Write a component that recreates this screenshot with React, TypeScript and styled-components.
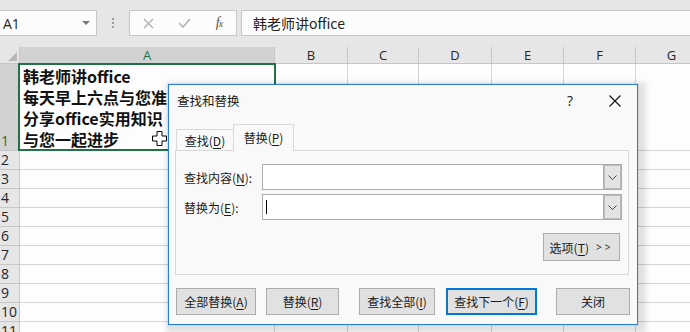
import React from "react";
import styled, { createGlobalStyle } from "styled-components";

const Global = createGlobalStyle`
  html, body { margin: 0; padding: 0; }
  body {
    width: 690px; height: 332px; overflow: hidden; background: #e6e6e6;
    font-family: "Noto Sans CJK SC", "Noto Sans", sans-serif;
  }
`;

const Page = styled.div`
  position: relative;
  width: 690px;
  height: 332px;
  overflow: hidden;
  background: #e6e6e6;
`;

/* ---------- formula bar ---------- */
const TopBar = styled.div`
  height: 47px;
  box-sizing: border-box;
  padding-top: 10px;
  display: flex;
  align-items: flex-start;
`;

const NameBox = styled.div`
  width: 97px;
  height: 26px;
  box-sizing: border-box;
  border: 1px solid #c6c6c6;
  border-left: none;
  background: #fcfcfc;
  display: flex;
  align-items: center;
  justify-content: space-between;
  padding: 0 6px 0 3px;
  font-family: "Open Sans", "Noto Sans", sans-serif;
  font-size: 14px;
  color: #262626;
`;

const Caret = styled.span`
  width: 0;
  height: 0;
  border-left: 4px solid transparent;
  border-right: 4px solid transparent;
  border-top: 4px solid #7a7a7a;
`;

const Dots = styled.div`
  width: 32px;
  height: 26px;
  display: flex;
  flex-direction: column;
  align-items: center;
  justify-content: center;
  gap: 2px;
  & > span {
    width: 2px;
    height: 2px;
    background: #9a9a9a;
  }
`;

const FxBox = styled.div`
  width: 108px;
  height: 26px;
  box-sizing: border-box;
  border: 1px solid #c6c6c6;
  background: #fcfcfc;
  display: grid;
  grid-template-columns: 36px 36px 34px;
  align-items: center;
  justify-items: center;
`;

const FxText = styled.span`
  font-family: "Liberation Serif", serif;
  font-style: italic;
  font-size: 14px;
  color: #555;
  letter-spacing: -1px;
  & > small {
    font-size: 10px;
  }
`;

const FormulaInput = styled.div`
  flex: 1;
  margin-left: 4px;
  height: 26px;
  box-sizing: border-box;
  border: 1px solid #c6c6c6;
  border-right: none;
  background: #fcfcfc;
  display: flex;
  align-items: center;
  padding-left: 11px;
  font-size: 14px;
  color: #222;
`;

/* ---------- sheet ---------- */
const Grid = styled.div`
  display: grid;
  grid-template-columns: 20px 255px 73px 71px 73px 72px 72px 72px;
  grid-template-rows: 17px 87px repeat(10, 19px);
  background: #ffffff;
`;

const Corner = styled.div`
  background: #e6e6e6;
  border-right: 1px solid #c6c6c6;
  border-bottom: 1px solid #c6c6c6;
  box-sizing: border-box;
  display: flex;
  align-items: flex-end;
  justify-content: flex-end;
  padding: 0 2px 2px 0;
`;

const CornerTri = styled.span`
  width: 0;
  height: 0;
  border-left: 9px solid transparent;
  border-bottom: 9px solid #b8b8b8;
`;

const ColHead = styled.div<{ $active?: boolean }>`
  box-sizing: border-box;
  background: ${(p) => (p.$active ? "#d2d2d2" : "#e6e6e6")};
  color: ${(p) => (p.$active ? "#217346" : "#262626")};
  border-right: 1px solid #c6c6c6;
  border-bottom: 1px solid ${(p) => (p.$active ? "#217346" : "#c6c6c6")};
  font-family: "Open Sans", "Noto Sans", sans-serif;
  font-size: 13px;
  line-height: 16px;
  text-align: center;
`;

const RowHead = styled.div<{ $active?: boolean }>`
  box-sizing: border-box;
  background: ${(p) => (p.$active ? "#d2d2d2" : "#e6e6e6")};
  color: ${(p) => (p.$active ? "#217346" : "#262626")};
  border-right: 1px solid ${(p) => (p.$active ? "#217346" : "#c6c6c6")};
  border-bottom: 1px solid #c6c6c6;
  font-family: "Open Sans", "Noto Sans", sans-serif;
  font-size: 14px;
  line-height: 18px;
  padding-left: 1px;
  display: flex;
  align-items: flex-end;
  overflow: hidden;
  white-space: nowrap;
`;

const Cell = styled.div`
  box-sizing: border-box;
  border-right: 1px solid #d4d4d4;
  border-bottom: 1px solid #d4d4d4;
  background: #fdfdfd;
`;

const SelectedCell = styled(Cell)`
  position: relative;
  display: flex;
  flex-direction: column;
  justify-content: flex-end;
  padding-left: 3px;
  font-weight: 700;
  font-size: 16px;
  line-height: 21px;
  color: #111;
  white-space: nowrap;
  &::after {
    content: "";
    position: absolute;
    left: -2px;
    top: -1px;
    right: -2px;
    bottom: -1px;
    border: 2px solid #217346;
    pointer-events: none;
  }
`;

const CellLine = styled.div`
  height: 21px;
  line-height: 21px;
`;

const CursorMark = styled.svg`
  position: absolute;
  left: 152px;
  top: 131px;
`;

/* ---------- dialog ---------- */
const Dialog = styled.div`
  position: absolute;
  left: 168px;
  top: 84px;
  width: 470px;
  height: 241px;
  box-sizing: border-box;
  border: 1px solid #2b7fd0;
  background: #f9f9f9;
  box-shadow: 0 0 0 1px rgba(0, 0, 0, 0.05), 3px 3px 5px 5px rgba(0, 0, 0, 0.11);
  display: flex;
  flex-direction: column;
  font-size: 12px;
  color: #1a1a1a;
`;

const TitleBar = styled.div`
  height: 31px;
  display: flex;
  align-items: center;
  padding: 0 12px 0 8px;
  font-size: 12.5px;
`;

const Title = styled.span`
  flex: 1;
`;

const TitleBtn = styled.span`
  width: 20px;
  display: flex;
  justify-content: center;
  align-items: center;
  font-family: "Open Sans", "Noto Sans", sans-serif;
  font-size: 14px;
  & + & {
    margin-left: 25px;
  }
`;

const Tabs = styled.div`
  margin: 8px 0 0 7px;
  height: 27px;
  display: flex;
  align-items: flex-end;
  position: relative;
  z-index: 1;
  margin-bottom: -1px;
`;

const Tab = styled.div<{ $active?: boolean }>`
  box-sizing: border-box;
  height: ${(p) => (p.$active ? "27px" : "22px")};
  width: ${(p) => (p.$active ? "61px" : "57px")};
  border: 1px solid #d9d9d9;
  border-bottom: ${(p) => (p.$active ? "none" : "1px solid #d9d9d9")};
  border-right: ${(p) => (p.$active ? "1px solid #d9d9d9" : "none")};
  background: #f9f9f9;
  display: flex;
  align-items: center;
  justify-content: center;
  padding-bottom: ${(p) => (p.$active ? "2px" : "0")};
`;

const Key = styled.span`
  text-decoration: underline;
  text-underline-offset: 2px;
`;

const Panel = styled.div`
  margin: 0 8px 0 6px;
  height: 125px;
  box-sizing: border-box;
  border: 1px solid #d9d9d9;
  padding: 13px 6px 0 8px;
  display: flex;
  flex-direction: column;
`;

const FieldRow = styled.div`
  display: grid;
  grid-template-columns: 78px 1fr;
  align-items: center;
  height: 26px;
  & + & {
    margin-top: 4px;
  }
`;

const Combo = styled.div`
  height: 26px;
  box-sizing: border-box;
  border: 1px solid #acacac;
  background: #ffffff;
  display: flex;
  align-items: stretch;
  justify-content: space-between;
`;

const TextCaret = styled.span`
  width: 1px;
  height: 14px;
  background: #000;
  align-self: center;
  margin-left: 3px;
`;

const DropBtn = styled.span`
  width: 17px;
  background: #e3e3e3;
  border-left: 1px solid #acacac;
  box-shadow: inset 0 0 0 1px #bdbdbd;
  display: flex;
  align-items: center;
  justify-content: center;
`;

const OptionsRow = styled.div`
  display: flex;
  justify-content: flex-end;
  margin-top: 13px;
  padding-right: 2px;
`;

const Button = styled.div<{ $w: number; $h?: number; $ml?: number; $primary?: boolean }>`
  width: ${(p) => p.$w}px;
  height: ${(p) => p.$h ?? 27}px;
  margin-left: ${(p) => p.$ml ?? 0}px;
  box-sizing: border-box;
  background: #e1e1e1;
  border: ${(p) => (p.$primary ? "2px solid #0078d7" : "1px solid #adadad")};
  display: flex;
  align-items: center;
  justify-content: center;
  font-size: 12px;
  white-space: nowrap;
`;

const Arrows = styled.span`
  font-family: "Open Sans", "Noto Sans", sans-serif;
  font-size: 10px;
  margin-left: 7px;
  letter-spacing: 3px;
`;

const ButtonRow = styled.div`
  display: flex;
  margin: 13px 0 0 7px;
`;

const Chevron = () => (
  <svg width="9" height="5" viewBox="0 0 9 5">
    <polyline points="0.5,0.5 4.5,4.5 8.5,0.5" fill="none" stroke="#444" strokeWidth="1" />
  </svg>
);

const cols = ["A", "B", "C", "D", "E", "F", "G"];

export default function App() {
  const rows = [2, 3, 4, 5, 6, 7, 8, 9, 10, 11];
  return (
    <Page>
      <Global />
      <TopBar>
        <NameBox>
          <span>A1</span>
          <Caret />
        </NameBox>
        <Dots>
          <span />
          <span />
          <span />
        </Dots>
        <FxBox>
          <svg width="11" height="11" viewBox="0 0 11 11">
            <path d="M1 1 L10 10 M10 1 L1 10" stroke="#b0b0b0" strokeWidth="1.3" />
          </svg>
          <svg width="13" height="10" viewBox="0 0 13 10">
            <path d="M1 5 L5 9 L12 1" fill="none" stroke="#b0b0b0" strokeWidth="1.5" />
          </svg>
          <FxText>
            f<small>x</small>
          </FxText>
        </FxBox>
        <FormulaInput>韩老师讲office</FormulaInput>
      </TopBar>

      <Grid>
        <Corner>
          <CornerTri />
        </Corner>
        {cols.map((c) => (
          <ColHead key={c} $active={c === "A"}>
            {c}
          </ColHead>
        ))}
        <RowHead $active>1</RowHead>
        <SelectedCell>
          <CellLine>韩老师讲office</CellLine>
          <CellLine>每天早上六点与您准</CellLine>
          <CellLine>分享office实用知识</CellLine>
          <CellLine>与您一起进步</CellLine>
        </SelectedCell>
        {cols.slice(1).map((c) => (
          <Cell key={c} />
        ))}
        {rows.map((r) => (
          <React.Fragment key={r}>
            <RowHead>{r}</RowHead>
            {cols.map((c) => (
              <Cell key={c} />
            ))}
          </React.Fragment>
        ))}
      </Grid>

      <CursorMark width="15" height="15" viewBox="0 0 15 15">
        <path
          d="M5 0.5 H10 V5 H14.5 V10 H10 V14.5 H5 V10 H0.5 V5 H5 Z"
          fill="#fff"
          stroke="#000"
          strokeWidth="1"
        />
      </CursorMark>

      <Dialog>
        <TitleBar>
          <Title>查找和替换</Title>
          <TitleBtn>?</TitleBtn>
          <TitleBtn>
            <svg width="12" height="12" viewBox="0 0 12 12">
              <path d="M0.5 0.5 L11.5 11.5 M11.5 0.5 L0.5 11.5" stroke="#111" strokeWidth="1.1" />
            </svg>
          </TitleBtn>
        </TitleBar>
        <Tabs>
          <Tab>
            查找(<Key>D</Key>)
          </Tab>
          <Tab $active>
            替换(<Key>P</Key>)
          </Tab>
        </Tabs>
        <Panel>
          <FieldRow>
            <span>
              查找内容(<Key>N</Key>):
            </span>
            <Combo>
              <span />
              <DropBtn>
                <Chevron />
              </DropBtn>
            </Combo>
          </FieldRow>
          <FieldRow>
            <span>
              替换为(<Key>E</Key>):
            </span>
            <Combo>
              <TextCaret />
              <DropBtn>
                <Chevron />
              </DropBtn>
            </Combo>
          </FieldRow>
          <OptionsRow>
            <Button $w={77} $h={28}>
              选项(<Key>T</Key>)<Arrows>&gt;&gt;</Arrows>
            </Button>
          </OptionsRow>
        </Panel>
        <ButtonRow>
          <Button $w={80}>
            全部替换(<Key>A</Key>)
          </Button>
          <Button $w={73} $ml={10}>
            替换(<Key>R</Key>)
          </Button>
          <Button $w={76} $ml={20}>
            查找全部(<Key>I</Key>)
          </Button>
          <Button $w={91} $ml={11} $primary>
            查找下一个(<Key>F</Key>)
          </Button>
          <Button $w={74} $ml={19}>
            关闭
          </Button>
        </ButtonRow>
      </Dialog>
    </Page>
  );
}
